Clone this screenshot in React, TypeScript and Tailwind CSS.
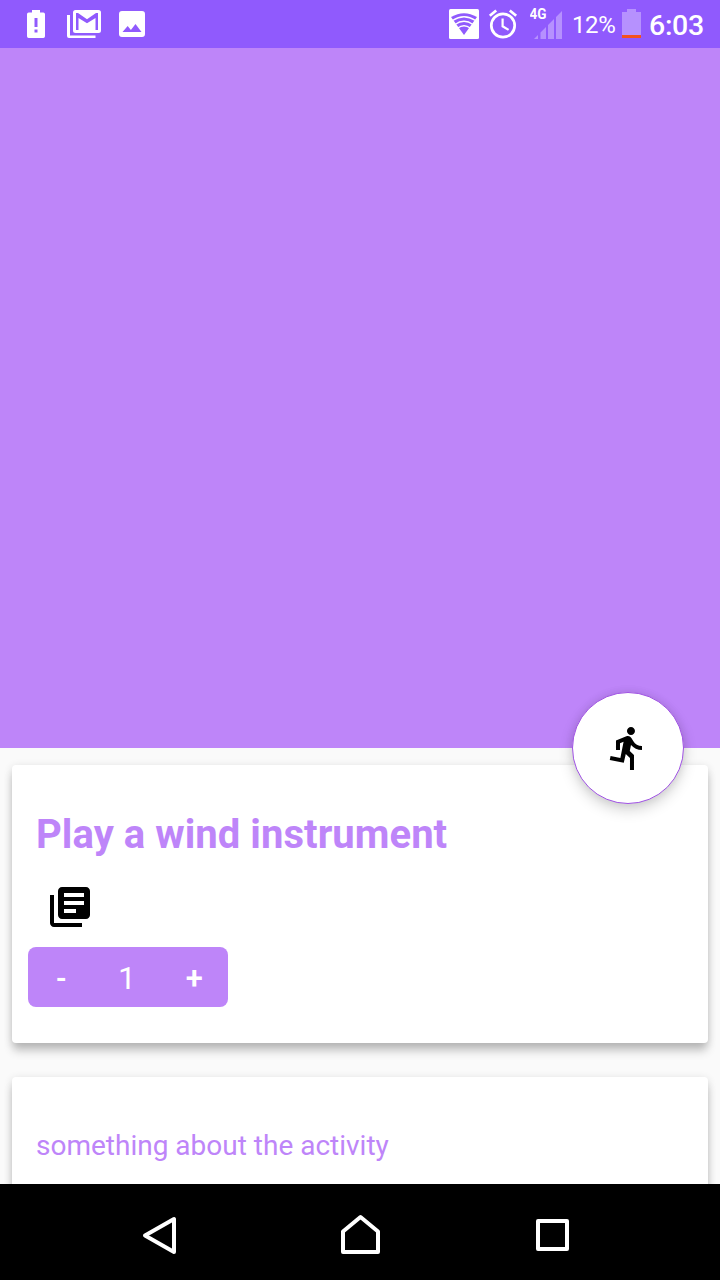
import type { ReactNode } from "react";

function StatusBar() {
  return (
    <header className="flex h-12 shrink-0 items-start bg-[#905afd] text-white">
      <svg className="mt-[10px] ml-[27px] h-7 w-[18px]" viewBox="0 0 18 28" fill="currentColor">
        <path
          fillRule="evenodd"
          d="M5 0h8v2.500h3.300q1.700 0 1.700 1.700v22.100q0 1.700-1.700 1.700H1.700Q0 28 0 26.300V4.200q0-1.700 1.700-1.700H5zM7.500 8v9h3V8zM7.500 19.500v3h3v-3z"
        />
      </svg>
      <svg className="mt-[9px] ml-[22px] h-[30px] w-[34px]" viewBox="0 0 34 30" fill="currentColor">
        <path d="M0 6h3v20.500h25.500V29H2q-2 0-2-2z" />
        <path
          fillRule="evenodd"
          d="M8.500 1h23q2.500 0 2.500 2.500v18q0 2.500-2.500 2.500h-23Q6 24 6 21.500v-18Q6 1 8.500 1zM9 4v17h2.500V9l8.500 5.300L28.500 9v12H31V4h-2l-9 6.300L11 4z"
        />
      </svg>
      <svg className="mt-[11px] ml-[18px] h-[26px] w-[26px]" viewBox="0 0 26 26" fill="currentColor">
        <path
          fillRule="evenodd"
          d="M3 0h20q3 0 3 3v20q0 3-3 3H3q-3 0-3-3V3q0-3 3-3zM3.500 21h19l-6-8-4.600 6-3.200-4z"
        />
      </svg>
      <svg className="mt-[9px] ml-[304px] h-[30px] w-[30px]" viewBox="0 0 30 30">
        <rect width="30" height="30" rx="1.500" fill="#fff" />
        <path d="M2 8Q15 .400 28 8L15 26z" fill="#905afd" />
        <g fill="none" stroke="#fff" strokeWidth="1.400">
          <path d="M3.500 11.500q11.500-7.500 23 0" />
          <path d="M6 15.500q9-6.500 18 0" />
          <path d="M8.500 19.300q6.500-5 13 0" />
        </g>
      </svg>
      <svg
        className="mt-[8px] ml-[9px] h-8 w-[30px]"
        viewBox="0 0 30 32"
        fill="none"
        stroke="currentColor"
        strokeWidth="2.700"
      >
        <circle cx="15" cy="17.500" r="11.700" />
        <path d="M1.800 7.800l6.400-5.300M28.200 7.800l-6.400-5.300" />
        <path d="M14.600 10.500v7.800l6 3.600" strokeWidth="2.200" />
      </svg>
      <svg className="mt-[6px] ml-[12px] h-[34px] w-[34px]" viewBox="0 0 34 34">
        <text
          x="-0.500"
          y="13"
          fill="#fff"
          className="font-['Roboto',sans-serif] text-[14px] font-bold"
          textLength="17"
          lengthAdjust="spacingAndGlyphs"
        >
          4G
        </text>
        <path d="M4 33l4-4V33zM10.500 33v-6.500l5.500-5.500V33zM18 33V19l6-6V33zM26 33V11l6-6V33z" fill="#b691fe" />
      </svg>
      <span className="mt-[9px] ml-[8px] w-11 text-[24px] leading-8 tracking-[-0.4px] whitespace-nowrap">12%</span>
      <svg className="mt-[9px] ml-[6px] h-[29px] w-[19px]" viewBox="0 0 19 29">
        <path d="M5 0h9v3h5v23H0V3h5z" fill="#b691fe" />
        <path d="M0 26h19v3H0z" fill="#f4511e" />
      </svg>
      <span className="mt-[10px] ml-[8px] text-[28.500px] leading-8 font-medium tracking-[-0.3px] whitespace-nowrap">
        6:03
      </span>
    </header>
  );
}

function Card({ children, className }: { children: ReactNode; className: string }) {
  return (
    <section
      className={`mx-3 shrink-0 rounded-[4px] bg-white shadow-[0_9px_10px_-1px_rgba(0,0,0,0.2),0_2px_9px_rgba(0,0,0,0.14)] ${className}`}
    >
      {children}
    </section>
  );
}

function Counter() {
  return (
    <div className="mt-4 ml-4 grid h-[60px] w-[200px] grid-cols-3 items-center rounded-lg bg-[#be85f9] text-center text-white">
      <button className="pt-[3px] text-[28px] leading-[57px] font-bold">-</button>
      <span className="pt-[3px] pr-[2px] text-[32px] leading-[57px]">1</span>
      <button className="pt-[4px] pr-[1px] text-[31px] leading-[56px] font-semibold">+</button>
    </div>
  );
}

function NavigationBar() {
  return (
    <nav className="flex h-24 shrink-0 items-start bg-black text-white">
      <svg className="mt-[31px] ml-[142px] h-10 w-[35px]" viewBox="0 0 35 40" fill="none" stroke="currentColor" strokeWidth="4" strokeLinejoin="round">
        <path d="M32 4v33L3 20.500z" />
      </svg>
      <svg className="mt-[29px] ml-[162px] h-[42px] w-[42px]" viewBox="0 0 42 42" fill="none" stroke="currentColor" strokeWidth="4" strokeLinejoin="round">
        <path d="M4 39V18.500L21.500 4 39 18.500V39z" />
      </svg>
      <svg className="mt-[34px] ml-[154px] h-[34px] w-[35px]" viewBox="0 0 35 34" fill="none" stroke="currentColor" strokeWidth="4" strokeLinejoin="round">
        <path d="M3 3h29v28H3z" />
      </svg>
    </nav>
  );
}

export default function App() {
  return (
    <div className="flex h-[1280px] w-[720px] flex-col overflow-hidden bg-[#fafafa] font-['Roboto',sans-serif]">
      <StatusBar />
      <main className="relative flex min-h-0 flex-1 flex-col overflow-hidden">
        <div className="h-[700px] shrink-0 bg-[#be85f9]" />
        <Card className="mt-[17px] h-[278px]">
          <h1 className="pt-[46px] pl-6 text-[40px] leading-[48px] font-bold tracking-[0.05px] text-[#be85f9]">
            Play a wind instrument
          </h1>
          <svg className="mt-[24px] ml-[34px] h-12 w-12" viewBox="0 0 24 24">
            <path d="M4 6H2v14c0 1.100.9 2 2 2h14v-2H4V6zm16-4H8c-1.100 0-2 .9-2 2v12c0 1.100.9 2 2 2h12c1.100 0 2-.9 2-2V4c0-1.100-.9-2-2-2zm-1 9H9V9h10v2zm-4 4H9v-2h6v2zm4-8H9V5h10v2z" />
          </svg>
          <Counter />
        </Card>
        <Card className="mt-[34px] h-[278px]">
          <p className="pt-[52px] pl-6 text-[28px] leading-[34px] text-[#be85f9]">something about the activity</p>
        </Card>
        <button className="absolute top-[644px] left-[572px] flex h-28 w-28 items-center justify-center rounded-full border border-[#a052e4] bg-white shadow-[0_6px_14px_rgba(0,0,0,0.17),0_0_8px_rgba(0,0,0,0.08)]">
          <svg className="h-12 w-12" viewBox="0 0 24 24">
            <path d="M13.490 5.480c1.100 0 2-.9 2-2s-.9-2-2-2-2 .9-2 2 .9 2 2 2zm-3.600 13.900l1-4.400 2.100 2v6h2v-7.500l-2.100-2 .6-3c1.300 1.500 3.300 2.500 5.500 2.500v-2c-1.900 0-3.500-1-4.300-2.400l-1-1.600c-.4-.6-1-1-1.700-1-.3 0-.5.1-.8.1l-5.200 2.200v4.700h2v-3.400l1.800-.7-1.600 8.100-4.900-1-.4 2 7 1.400z" />
          </svg>
        </button>
      </main>
      <NavigationBar />
    </div>
  );
}
